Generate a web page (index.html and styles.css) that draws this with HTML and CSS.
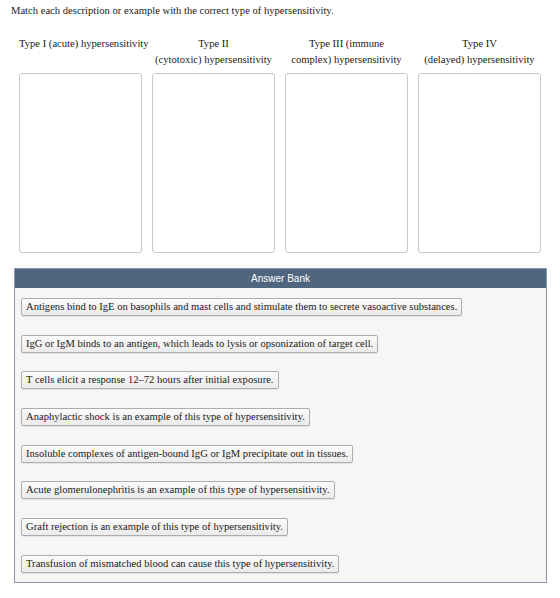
FILE: index.html
```html
<!DOCTYPE html>
<html>
<head>
<meta charset="utf-8">
<link rel="stylesheet" href="styles.css">
</head>
<body>
<p class="prompt">Match each description or example with the correct type of hypersensitivity.</p>
<div class="headers">
  <div class="hcell">Type I (acute) hypersensitivity</div>
  <div class="hcell">Type II<br>(cytotoxic) hypersensitivity</div>
  <div class="hcell">Type III (immune<br>complex) hypersensitivity</div>
  <div class="hcell">Type IV<br>(delayed) hypersensitivity</div>
</div>
<div class="targets">
  <div class="target"></div>
  <div class="target"></div>
  <div class="target"></div>
  <div class="target"></div>
</div>
<div class="bank">
  <div class="bank-head">Answer Bank</div>
  <div class="bank-items">
    <div class="item">Antigens bind to IgE on basophils and mast cells and stimulate them to secrete vasoactive substances.</div>
    <div class="item">IgG or IgM binds to an antigen, which leads to lysis or opsonization of target cell.</div>
    <div class="item">T cells elicit a response 12–72 hours after initial exposure.</div>
    <div class="item">Anaphylactic shock is an example of this type of hypersensitivity.</div>
    <div class="item">Insoluble complexes of antigen-bound IgG or IgM precipitate out in tissues.</div>
    <div class="item">Acute glomerulonephritis is an example of this type of hypersensitivity.</div>
    <div class="item">Graft rejection is an example of this type of hypersensitivity.</div>
    <div class="item">Transfusion of mismatched blood can cause this type of hypersensitivity.</div>
  </div>
</div>
</body>
</html>
```
FILE: styles.css
```css
html, body {
  margin: 0;
  padding: 0;
  background: #ffffff;
}
body {
  font-family: "Liberation Serif", "Times New Roman", serif;
  font-size: 10.6px;
  color: #1a1a1a;
  width: 560px;
}
.prompt {
  margin: 0;
  padding: 4px 0 0 11px;
  line-height: 14px;
}
.headers,
.targets {
  display: grid;
  grid-template-columns: repeat(4, 123px);
  column-gap: 10px;
  margin-left: 19px;
}
.headers {
  margin-top: 18px;
  line-height: 16px;
  text-align: center;
  white-space: nowrap;
}
.targets {
  margin-top: 5px;
}
.target {
  height: 178px;
  border: 1px solid #c8c8c8;
  border-radius: 3px;
  background: #fff;
}
.bank {
  margin: 15px 0 0 14px;
  width: 531px;
  border: 1px solid #8b97a6;
  background: #f6f6f6;
}
.bank-head {
  height: 19px;
  line-height: 19px;
  background: #50667f;
  color: #fff;
  text-align: center;
  font-family: "Liberation Sans", Arial, sans-serif;
  font-size: 10px;
}
.bank-items {
  display: flex;
  flex-direction: column;
  align-items: flex-start;
  gap: 18.7px;
  padding: 10px 0 9px 6px;
}
.item {
  height: 16px;
  line-height: 16px;
  padding: 0 4px;
  border: 1px solid #adadad;
  border-radius: 2px;
  background: linear-gradient(#fbfbfb, #ebebeb);
  box-shadow: 0 1px 1px rgba(0, 0, 0, 0.08);
  color: #1a1a1a;
  white-space: nowrap;
}
```
